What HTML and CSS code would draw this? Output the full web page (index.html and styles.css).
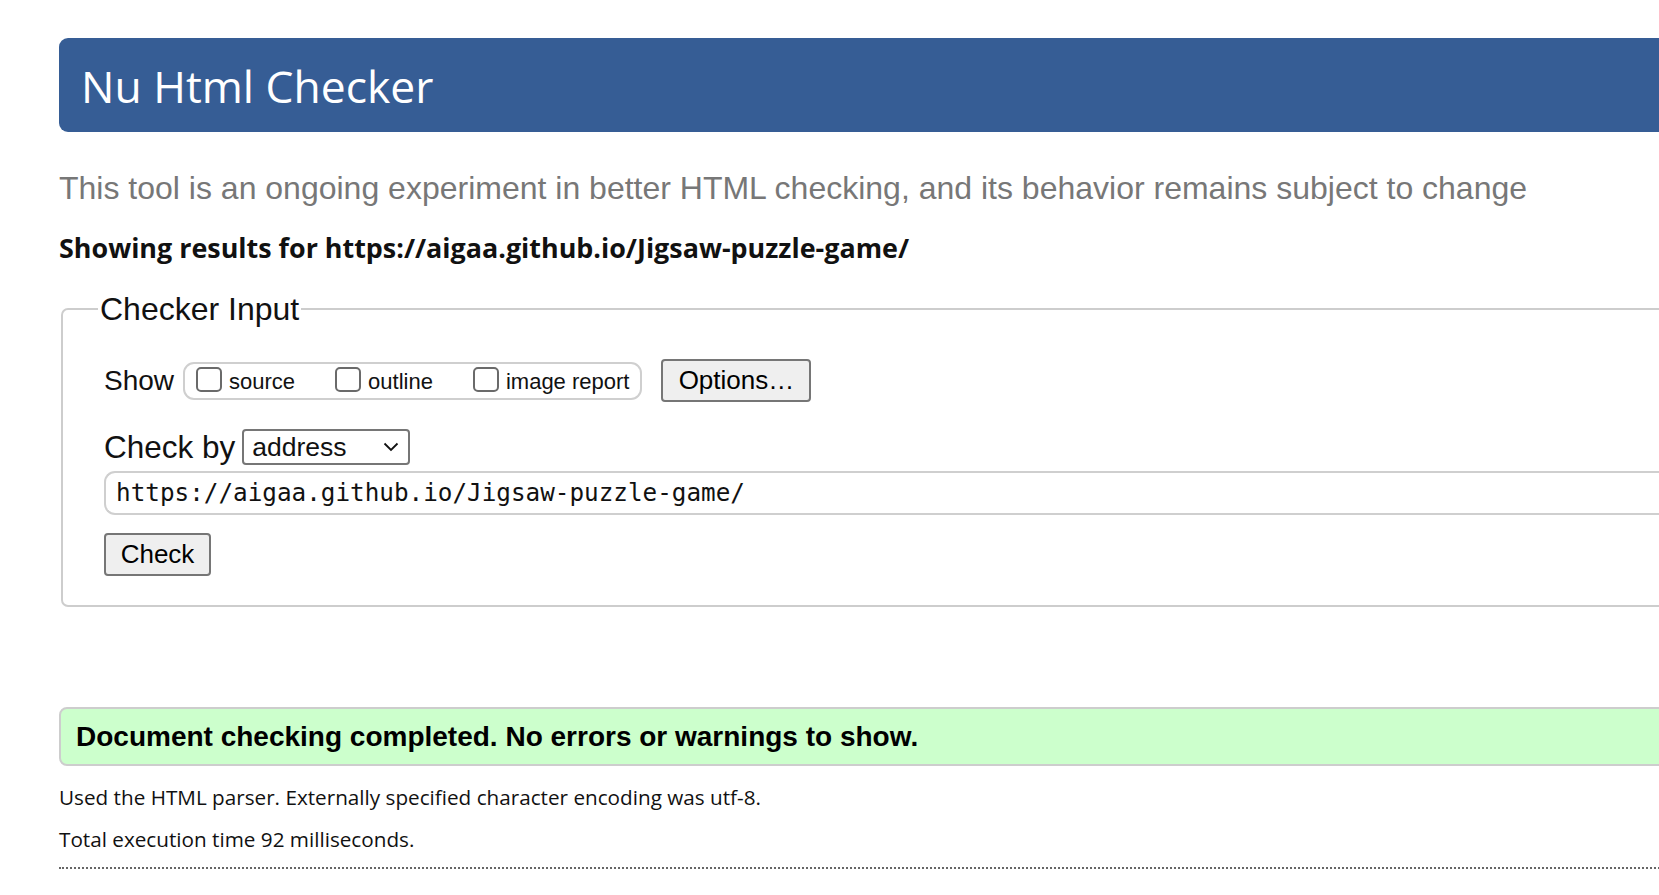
FILE: index.html
```html
<!DOCTYPE html>
<html lang="en">
<head>
<meta charset="utf-8">
<title>Nu Html Checker</title>
<link rel="stylesheet" href="styles.css">
</head>
<body>
<div class="page">
  <header class="banner"><h1 class="title">Nu Html Checker</h1></header>
  <p class="tagline">This tool is an ongoing experiment in better HTML checking, and its behavior remains subject to change</p>
  <p class="showing">Showing results for https://aigaa.github.io/Jigsaw-puzzle-game/</p>
  <fieldset class="checker">
    <legend class="legend">Checker Input</legend>
    <div class="show-row">
      <span class="show-label">Show</span>
      <div class="show-group">
        <label class="opt"><input type="checkbox" class="cb"><span>source</span></label>
        <label class="opt"><input type="checkbox" class="cb"><span>outline</span></label>
        <label class="opt"><input type="checkbox" class="cb"><span>image report</span></label>
      </div>
      <button class="btn btn-options" type="button">Options…</button>
    </div>
    <div class="by-row">
      <span class="by-label">Check by</span>
      <div class="select">
        <span class="select-text">address</span>
        <svg class="chev" width="16" height="10" viewBox="0 0 16 10"><path d="M1.5 1.5 L8 8 L14.5 1.5" fill="none" stroke="#111" stroke-width="1.8"/></svg>
      </div>
    </div>
    <div class="url">https://aigaa.github.io/Jigsaw-puzzle-game/</div>
    <button class="btn btn-check" type="button">Check</button>
  </fieldset>
  <div class="success">Document checking completed. No errors or warnings to show.</div>
  <p class="details">Used the HTML parser. Externally specified character encoding was utf-8.</p>
  <p class="details details-2">Total execution time 92 milliseconds.</p>
  <hr class="dotted">
</div>
</body>
</html>
```
FILE: styles.css
```css
html, body {
  margin: 0;
  padding: 0;
  background: #fff;
  overflow: hidden;
}
.page {
  width: 1900px;
  padding-left: 59px;
  padding-top: 38px;
  box-sizing: border-box;
}
.banner {
  height: 94px;
  background: #365d95;
  border-radius: 9px;
  display: flex;
  align-items: center;
  padding-left: 22px;
}
.title {
  margin: 0;
  font-family: "Open Sans", sans-serif;
  font-weight: 400;
  font-size: 44.4px;
  line-height: 50px;
  color: #fff;
  margin-top: 2px;
}
.tagline {
  margin: 38px 0 0 0;
  font-family: "Liberation Sans", Arial, sans-serif;
  font-size: 32px;
  line-height: 36px;
  color: #777;
}
.showing {
  margin: 24px 0 0 0;
  font-family: "Open Sans", sans-serif;
  font-weight: 700;
  font-size: 26.9px;
  line-height: 36px;
  color: #111;
}
.checker {
  margin: 25px 0 0 2px;
  border: 2px solid #cdcdcd;
  border-radius: 7px;
  padding: 32px 0 29px 41px;
  font-family: "Liberation Sans", Arial, sans-serif;
  color: #111;
}
.legend {
  font-size: 32px;
  line-height: 36px;
  padding: 0 2px;
  margin-left: -6px;
}
.show-row {
  display: flex;
  align-items: center;
  height: 43px;
}
.show-label {
  font-size: 28px;
  margin-right: 9px;
}
.show-group {
  display: flex;
  align-items: baseline;
  height: 38px;
  box-sizing: border-box;
  border: 2px solid #cfcfcf;
  border-radius: 11px;
  padding: 0 11px 0 11px;
  margin-right: 19px;
}
.opt {
  display: flex;
  align-items: flex-end;
  font-size: 22px;
  margin-right: 40px;
  height: 28px;
  line-height: 22px;
}
.opt:last-child { margin-right: 0; }
.opt span { margin-left: 7px; line-height: 20px; }
.cb {
  appearance: none;
  -webkit-appearance: none;
  width: 26px;
  height: 25px;
  margin: 0;
  border: 2px solid #6a6a6a;
  border-radius: 5px;
  background: #fff;
  box-sizing: border-box;
}
.btn {
  font-family: "Liberation Sans", Arial, sans-serif;
  background: #efefef;
  border: 2px solid #767676;
  border-radius: 4px;
  color: #000;
  padding: 0;
  box-sizing: border-box;
}
.btn-options {
  width: 150px;
  height: 43px;
  font-size: 26px;
}
.by-row {
  display: flex;
  align-items: center;
  margin-top: 27px;
  height: 36px;
}
.by-label {
  font-size: 31.5px;
  margin-right: 7px;
}
.select {
  width: 168px;
  height: 36px;
  box-sizing: border-box;
  border: 2px solid #767676;
  border-radius: 4px;
  display: flex;
  align-items: center;
  justify-content: space-between;
  padding: 0 9px 0 8px;
}
.select-text { font-size: 26.5px; }
.url {
  margin-top: 6px;
  height: 44px;
  box-sizing: border-box;
  border: 2px solid #cfcfcf;
  border-right: none;
  border-radius: 11px 0 0 11px;
  font-family: "DejaVu Sans Mono", "Liberation Mono", monospace;
  font-size: 24.3px;
  line-height: 40px;
  padding-left: 10px;
  color: #111;
}
.btn-check {
  margin-top: 18px;
  width: 107px;
  height: 43px;
  font-size: 26px;
}
.success {
  margin-top: 100px;
  height: 59px;
  box-sizing: border-box;
  background: #ccffcc;
  border: 2px solid #cdcdcd;
  border-radius: 8px;
  font-family: "Liberation Sans", Arial, sans-serif;
  font-weight: 700;
  font-size: 28px;
  line-height: 55px;
  padding-left: 15px;
  color: #000;
}
.details {
  margin: 17px 0 0 0;
  font-family: "Open Sans", sans-serif;
  font-size: 20.7px;
  line-height: 28px;
  color: #111;
}
.details-2 { margin-top: 14px; }
.dotted {
  margin: 14px 0 0 0;
  border: none;
  border-top: 2px dotted #666;
  height: 0;
}
```
